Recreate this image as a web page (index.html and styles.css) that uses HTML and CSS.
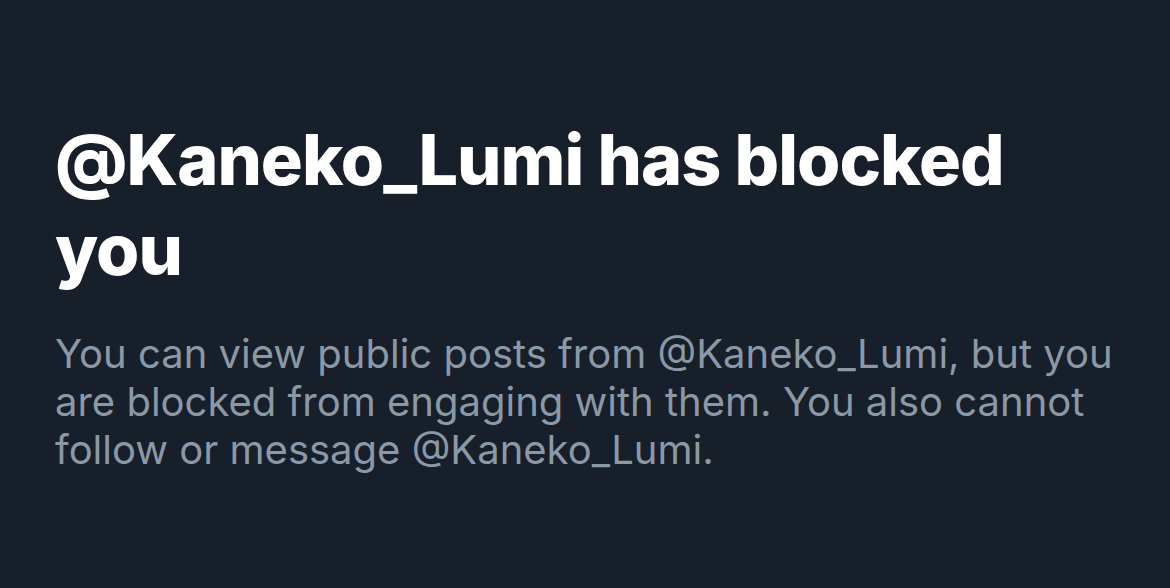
FILE: index.html
```html
<!DOCTYPE html>
<html lang="en">
<head>
<meta charset="utf-8">
<link rel="stylesheet" href="styles.css">
</head>
<body>
<main class="blocked">
  <h1 class="blocked-title">@Kaneko_Lumi has blocked you</h1>
  <p class="blocked-text">You can view public posts from @Kaneko_Lumi, but you are blocked from engaging with them. You also cannot follow or message @Kaneko_Lumi.</p>
</main>
</body>
</html>
```
FILE: styles.css
```css
html, body {
  margin: 0;
  padding: 0;
  background: #171f2a;
  height: 100%;
}
body {
  font-family: Inter, "Noto Sans", sans-serif;
}
.blocked {
  padding: 115px 55px 0 55px;
  max-width: 1065px;
}
.blocked-title {
  margin: 0;
  color: #ffffff;
  font-size: 70px;
  font-weight: 800;
  line-height: 90px;
  letter-spacing: -1px;
}
.blocked-text {
  margin: 35px 0 0 0;
  color: #8b98a5;
  font-size: 40px;
  font-weight: 400;
  line-height: 48px;
}
```
